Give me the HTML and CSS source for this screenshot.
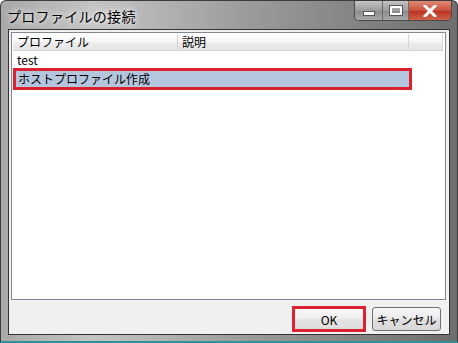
FILE: index.html
```html
<!DOCTYPE html>
<html lang="ja">
<head>
    <meta charset="UTF-8">
    <title>プロファイルの接続</title>
    <link rel="stylesheet" href="styles.css">
</head>
<body>
    <div class="window">
        <div class="titlebar">
            <span class="title">プロファイルの接続</span>
            <div class="caption-buttons">
                <div class="cap cap-min"><span class="glyph-min"></span></div>
                <div class="cap cap-max"><span class="glyph-max"></span></div>
                <div class="cap cap-close">
                    <svg width="14" height="12" viewBox="0 0 14 12">
                        <path d="M2 1 L12 11 M12 1 L2 11" stroke="#fff" stroke-width="3" stroke-linecap="square"/>
                    </svg>
                </div>
            </div>
        </div>
        <div class="client">
            <div class="listbox">
                <div class="list-header">
                    <div class="col col-name">プロファイル</div>
                    <div class="col col-desc">説明</div>
                    <div class="col col-rest"></div>
                </div>
                <div class="list-body">
                    <div class="row">test</div>
                    <div class="row row-selected">ホストプロファイル作成</div>
                </div>
            </div>
            <div class="footer">
                <button class="btn btn-ok">OK</button>
                <button class="btn">キャンセル</button>
            </div>
        </div>
    </div>
</body>
</html>
```

FILE: styles.css
```css
body {
    margin: 0;
    font-family: "Noto Sans CJK JP", "Noto Sans", sans-serif;
    font-size: 12px;
    color: #000;
}
.window {
    width: 458px;
    height: 343px;
    box-sizing: border-box;
    display: flex;
    flex-direction: column;
    background: linear-gradient(90deg, #a8a8a8 0%, #c4c4c4 20%, #9a9a9a 55%, #6e6e6e 100%);
    border: 1px solid #3c3c3c;
    border-bottom: 2px solid #3a8c9c;
    border-radius: 6px 6px 0 0;
    padding: 0 7px 6px 7px;
}
.titlebar {
    height: 28px;
    display: flex;
    align-items: flex-start;
    justify-content: space-between;
}
.title {
    font-size: 14px;
    margin: 5px 0 0 -1px;
    text-shadow: 0 0 8px #f2f2f2, 0 0 4px #ffffff;
    letter-spacing: 0.3px;
}
.caption-buttons {
    display: flex;
    margin-right: -2px;
    border: 1px solid #4a4a4a;
    border-top: none;
    border-radius: 0 0 5px 5px;
    overflow: hidden;
    height: 19px;
}
.cap {
    display: flex;
    align-items: center;
    justify-content: center;
    background: linear-gradient(#c4c4c4, #9c9c9c 50%, #8a8a8a 51%, #a8a8a8);
    border-right: 1px solid #6a6a6a;
}
.cap-min { width: 27px; }
.cap-max { width: 25px; }
.cap-close {
    width: 42px;
    border-right: none;
    background: linear-gradient(#e08a78, #c9503a 50%, #b8321e 51%, #d2604a);
}
.glyph-min {
    width: 10px;
    height: 3px;
    margin-top: 5px;
    background: #fff;
    border: 1px solid #555;
}
.glyph-max {
    width: 8px;
    height: 5px;
    border: 2px solid #fff;
    outline: 1px solid #555;
}
.client {
    flex: 1;
    background: #f0f0f0;
    border: 1px solid #333;
    display: flex;
    flex-direction: column;
    padding: 2px 3px 0 2px;
}
.listbox {
    height: 266px;
    background: #fff;
    border: 1px solid #828790;
    display: flex;
    flex-direction: column;
}
.list-header {
    display: flex;
    height: 16px;
    margin: 1px 2px 0 1px;
    background: linear-gradient(#ffffff, #f7f7f7 45%, #ebebeb 55%, #e4e4e4);
    border-bottom: 1px solid #d5d5d5;
}
.col {
    line-height: 16px;
    padding-left: 4px;
    border-right: 1px solid #d5d5d5;
}
.col-name { width: 160px; }
.col-desc { width: 226px; }
.col-rest { flex: 1; border-right: 1px solid #d5d5d5; }
.list-body {
    padding: 0 0 0 1px;
}
.row {
    height: 18px;
    line-height: 18px;
    padding-left: 4px;
}
.row-selected {
    width: 391px;
    height: 16px;
    line-height: 16px;
    margin-top: -1px;
    background: #b3c6de;
    border: 3px solid #dc2230;
    padding-left: 2px;
}
.footer {
    flex: 1;
    display: flex;
    justify-content: flex-end;
    align-items: flex-start;
    gap: 6px;
    padding: 7px 5px 0 0;
}
.btn {
    font-family: inherit;
    font-size: 12px;
    width: 69px;
    height: 24px;
    padding: 0;
    background: linear-gradient(#f6f6f6, #ececec 45%, #dedede 55%, #d8d8d8);
    border: 1px solid #707070;
    border-radius: 3px;
    color: #000;
}
.btn-ok {
    width: 74px;
    height: 26px;
    margin-top: -1px;
    border: 3px solid #dc2230;
    border-radius: 0;
    background: linear-gradient(#f8f8f8, #efefef 45%, #e3e3e3 55%, #dcdcdc);
}
```
